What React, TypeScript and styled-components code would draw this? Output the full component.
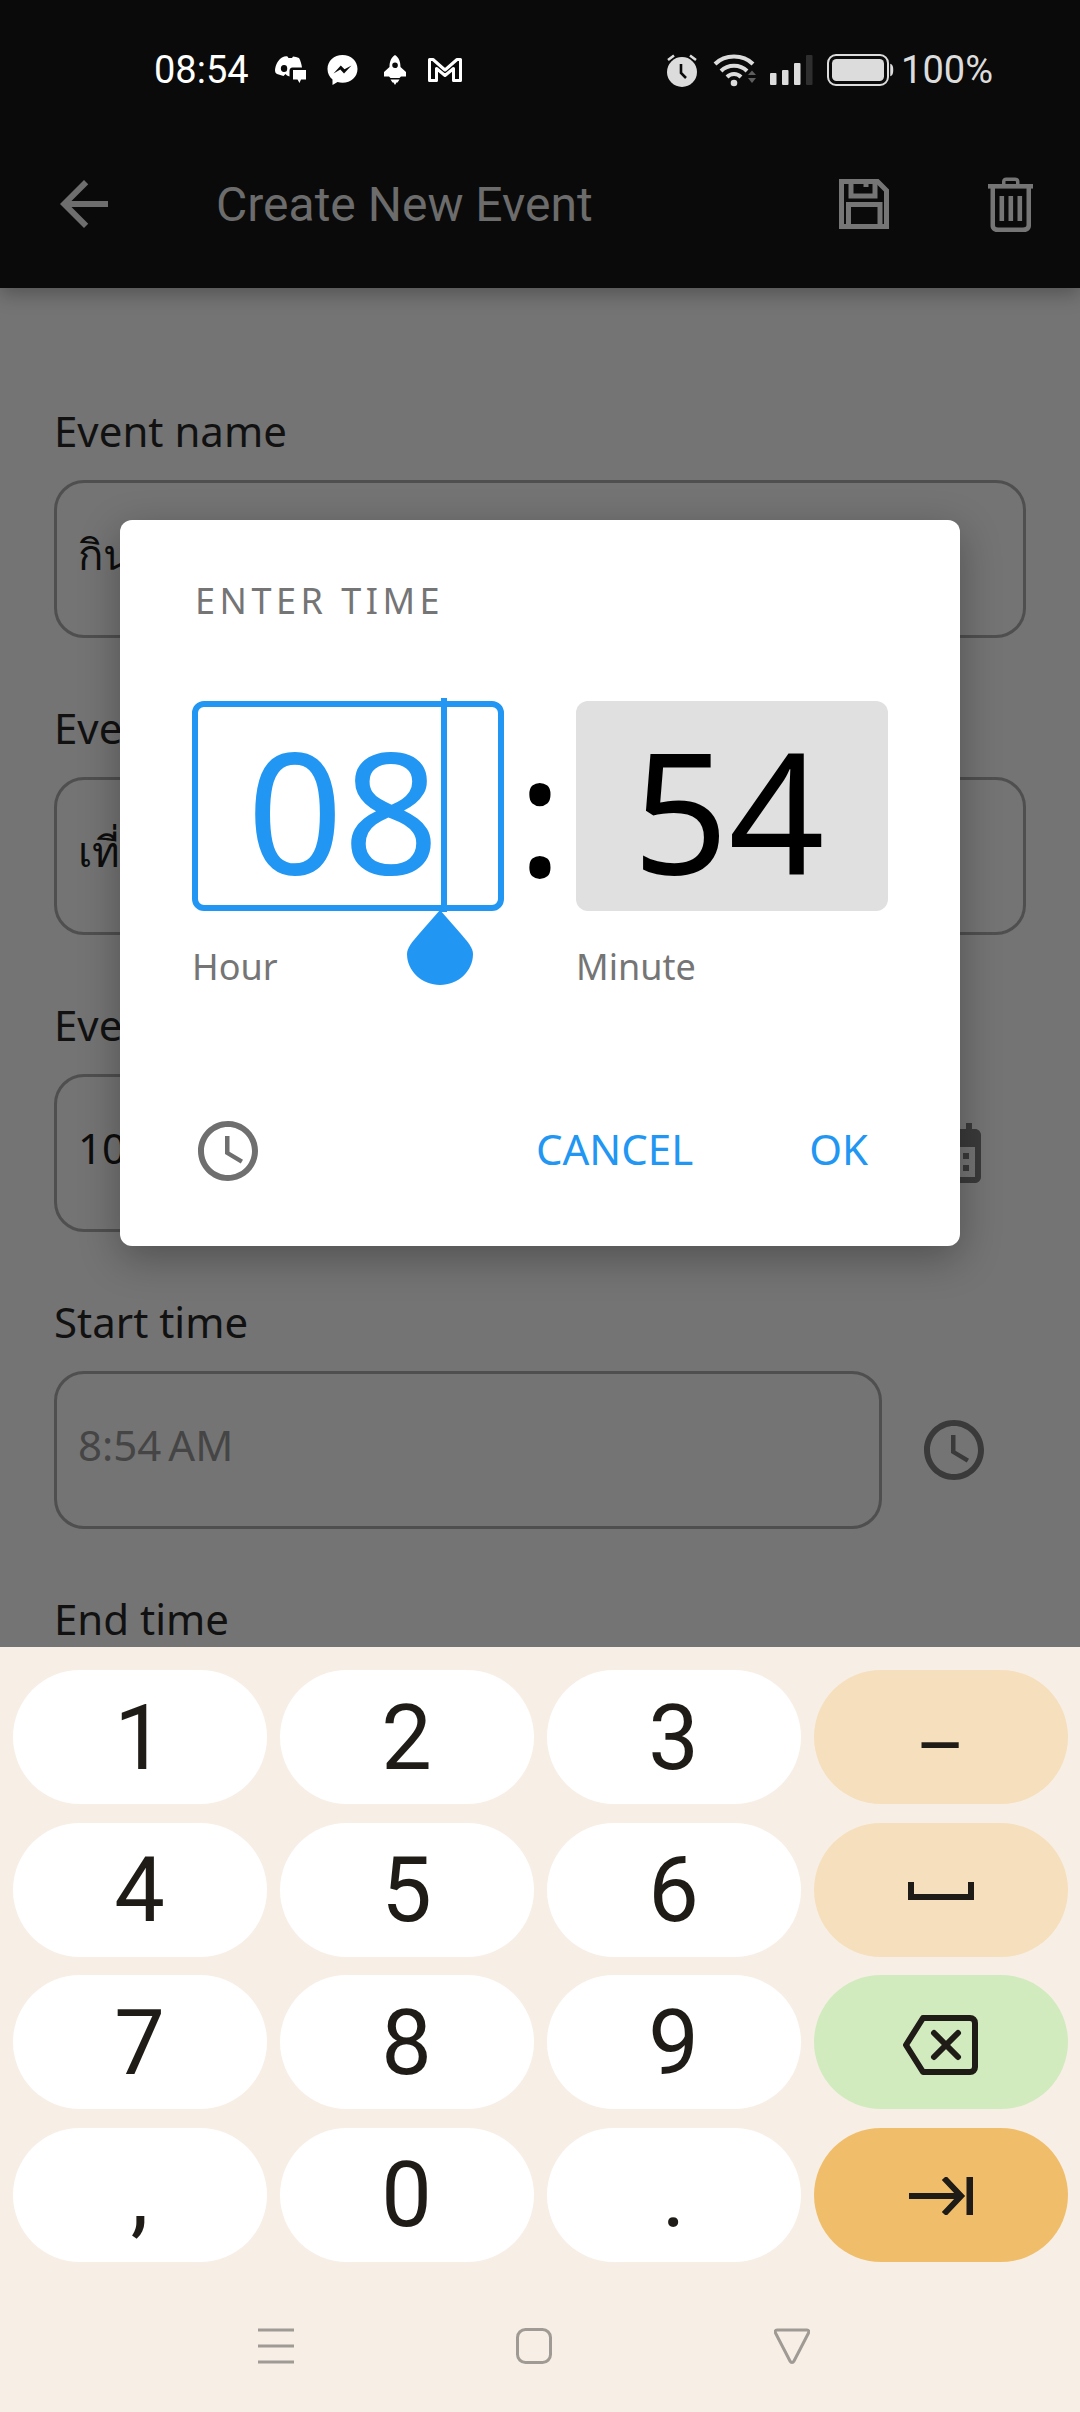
import React from "react";
import styled, { createGlobalStyle } from "styled-components";

const GlobalStyle = createGlobalStyle`
  html, body {
    margin: 0;
    padding: 0;
    background: #747474;
  }

  * {
    box-sizing: border-box;
  }
`;

const Screen = styled.div`
  position: relative;
  display: flex;
  flex-direction: column;
  width: 1080px;
  height: 2412px;
  overflow: hidden;
  background: #747474;
  font-family: "Noto Sans", "Open Sans", sans-serif;
`;

const Top = styled.div`
  position: relative;
  z-index: 1;
  background: #0a0a0a;
  box-shadow: 0 6px 18px rgba(0, 0, 0, 0.28);
`;

const StatusBar = styled.div`
  display: flex;
  align-items: center;
  height: 120px;
  padding: 20px 87px 0 154px;
  font-family: Roboto, sans-serif;
  font-size: 38px;
`;

const Time = styled.span`
  width: 121px;
  color: #ffffff;
`;

const NotifyIcons = styled.div`
  display: flex;
  align-items: center;
  gap: 21px;
  color: #ffffff;
`;

const RocketSlot = styled.span`
  display: flex;
  margin-left: 4px;
`;

const SystemIcons = styled.div`
  display: flex;
  align-items: center;
  margin-left: auto;
  color: #dcdcdc;
`;

const Percent = styled.span`
  margin-left: 7px;
`;

const AppBar = styled.div`
  display: flex;
  align-items: center;
  height: 168px;
  padding: 0 47px 0 48px;
  color: #757575;
`;

const Title = styled.h1`
  margin: 0 0 0 96px;
  font-family: Roboto, sans-serif;
  font-size: 48px;
  font-weight: 400;
  color: #6c6c6c;
`;

const BarActions = styled.div`
  display: flex;
  align-items: center;
  gap: 99px;
  margin-left: auto;
`;

const Form = styled.div`
  flex: 1;
  min-height: 0;
  overflow: hidden;
  padding: 112.5px 54px 0;
`;

const Field = styled.div`
  margin-bottom: 59.5px;
`;

const Label = styled.div`
  height: 60px;
  margin-bottom: 19.5px;
  font-size: 42px;
  line-height: 60px;
  color: #111111;
`;

const InputRow = styled.div<{ $withIcon?: boolean }>`
  display: flex;
  align-items: center;
  gap: 36px;
  margin-right: ${(props) => (props.$withIcon ? "36px" : "0")};
`;

const Input = styled.div<{ $hint?: boolean }>`
  flex: 1;
  height: 158px;
  padding: 0 21px;
  border: 3px solid #4f4f4f;
  border-radius: 30px;
  font-size: 42px;
  line-height: 142px;
  white-space: nowrap;
  color: ${(props) => (props.$hint ? "#454545" : "#0d0d0d")};
`;

const FieldIcon = styled.svg`
  flex: none;
  width: 72px;
  height: 72px;
  fill: #3a3a3a;
`;

const Dialog = styled.div`
  position: absolute;
  top: 520px;
  left: 120px;
  z-index: 2;
  display: flex;
  flex-direction: column;
  width: 840px;
  height: 726px;
  padding: 55px 72px 59px;
  border-radius: 12px;
  background: #ffffff;
  box-shadow: 0 12px 40px rgba(0, 0, 0, 0.3);
`;

const DialogTitle = styled.div`
  height: 52px;
  margin: 0 0 74px 3px;
  font-size: 36px;
  line-height: 52px;
  letter-spacing: 4.5px;
  color: #757575;
`;

const TimeRow = styled.div`
  display: flex;
  align-items: flex-start;
`;

const TimeColumn = styled.div`
  width: 312px;
`;

const TimeBox = styled.div<{ $active?: boolean }>`
  position: relative;
  display: flex;
  align-items: center;
  justify-content: center;
  height: 210px;
  padding: 5px ${(props) => (props.$active ? "10px" : "7px")} 0 0;
  border: ${(props) => (props.$active ? "6px solid #2196f3" : "none")};
  border-radius: 12px;
  background: ${(props) => (props.$active ? "#ffffff" : "#e0e0e0")};
  font-size: 168px;
  line-height: 1;
  color: ${(props) => (props.$active ? "#2196f3" : "#000000")};
`;

const Cursor = styled.div`
  position: absolute;
  top: -9px;
  left: 242.5px;
  width: 6px;
  height: 214px;
  background: #2196f3;
`;

const Handle = styled.svg`
  position: absolute;
  top: 203px;
  left: 209px;
  width: 66px;
  height: 75px;
  fill: #2196f3;
`;

const Colon = styled.div`
  width: 72px;
  height: 210px;
  font-size: 171px;
  line-height: 220px;
  text-align: center;
  color: #000000;
`;

const TimeLabel = styled.div`
  height: 50px;
  margin-top: 30.5px;
  font-size: 36px;
  line-height: 50px;
  color: #757575;
`;

const DialogFooter = styled.div`
  display: flex;
  align-items: center;
  justify-content: space-between;
  margin-top: auto;
  padding-right: 20px;
`;

const ModeIcon = styled.svg`
  width: 72px;
  height: 72px;
  fill: #6f6f6f;
`;

const DialogActions = styled.div`
  display: flex;
  gap: 116px;
  margin-bottom: 6px;
`;

const TextButton = styled.span`
  font-size: 42px;
  color: #2196f3;
`;

const Keyboard = styled.div`
  flex: none;
  display: flex;
  flex-direction: column;
  height: 765px;
  padding: 23px 12.5px 0;
  background: #f7efe6;
`;

const Keys = styled.div`
  display: grid;
  grid-template-columns: repeat(4, 254px);
  grid-auto-rows: 134px;
  column-gap: 13px;
  row-gap: 18.5px;
`;

const Key = styled.div<{ $bg?: string }>`
  display: flex;
  align-items: center;
  justify-content: center;
  padding-top: 2px;
  border-radius: 67px;
  background: ${(props) => props.$bg ?? "#ffffff"};
  font-family: Roboto, sans-serif;
  font-size: 90px;
  color: #1f1b16;
`;

const DashKey = styled.span`
  padding-top: 16px;
  font-size: 76px;
`;

const KeyIcon = styled.svg`
  fill: none;
  stroke: #1f1b16;
  stroke-width: 6;
`;

const BackspaceIcon = styled(KeyIcon)`
  margin: 3px 2px 0 0;
`;

const NavBar = styled.div`
  display: flex;
  align-items: center;
  margin-top: 66px;
  padding-left: 245.5px;
  gap: 222px;
`;

const NavIcon = styled.svg`
  width: 36px;
  height: 36px;
  fill: none;
  stroke: #a09a94;
  stroke-width: 3;
`;

const SaveIcon = () => (
  <svg width="50" height="50" viewBox="0 0 50 50" fill="none" stroke="#757575" strokeWidth="5">
    <path d="M2.5 2.5H38.5L47.5 11.5V47.5H2.5Z" />
    <path d="M12 3V17H36V3" />
    <path d="M27 3V8" />
    <path d="M9.5 48V25.5H41V48" />
  </svg>
);

const TrashIcon = () => (
  <svg width="45" height="55" viewBox="0 0 45 55" fill="#757575">
    <rect x="0" y="7" width="45" height="4.6" />
    <path d="M14 8V4.5C14 2 16 0.5 18 0.5H27C29.5 0.5 31.5 2 31.5 4.5V8H28V5C28 4.2 27.5 4 27 4H18C17.5 4 17.5 4.2 17.5 5V8Z" />
    <path d="M2.5 10H7V48C7 49.8 8.2 50.5 10 50.5H35C36.8 50.5 38.5 49.8 38.5 48V10H43V48.5C43 52.5 40 55 36.5 55H9C5.5 55 2.5 52.5 2.5 48.5Z" />
    <rect x="11.5" y="19" width="4.6" height="25" />
    <rect x="20.5" y="19" width="4.6" height="25" />
    <rect x="29.5" y="19" width="4.6" height="25" />
  </svg>
);

const ClockPath = () => (
  <>
    <path d="M11.99 2C6.47 2 2 6.48 2 12s4.47 10 9.99 10C17.52 22 22 17.52 22 12S17.52 2 11.99 2zM12 20c-4.42 0-8-3.58-8-8s3.58-8 8-8 8 3.58 8 8-3.58 8-8 8z" />
    <path d="M12.5 7H11v6l5.25 3.15.75-1.23-4.5-2.67z" />
  </>
);

const DiscordIcon = () => (
  <svg width="31" height="28" viewBox="0 0 31 28" fill="currentColor">
    <path
      fillRule="evenodd"
      d="M7 1.500C9 0.500 11 0 12.500 0.500L13.500 2H17L18 0.500C20 0.500 22 1 24 2C25.500 4.500 26.500 8 27 11.500H17.500C15.500 11.500 14.500 13 14.500 15V20.500L12 19.500L10.500 18L8.500 20L2 18C0.500 17 0 16 0 14C0.500 9 3 4 7 1.500ZM9 9A3.200 3.500 0 1 0 9.100 16A3.200 3.500 0 1 0 9 9Z"
    />
    <path d="M18 14H31V23.500H26L24.500 27L22.500 23.500H18Z" />
  </svg>
);

const MessengerIcon = () => (
  <svg width="31" height="30" viewBox="0 0 31 30" fill="currentColor">
    <path
      fillRule="evenodd"
      d="M15.500 0C7 0 0.500 6 0.500 14C0.500 18.500 2.500 22 5.500 24.500V30L10.500 27C12 27.500 13.800 27.800 15.500 27.800C24 27.800 30.500 21.800 30.500 14C30.500 6 24 0 15.500 0ZM17 18.500L13.300 14.500L6.500 18.500L13.800 10.500L17.500 14.300L24.500 10.500Z"
    />
  </svg>
);

const RocketIcon = () => (
  <svg width="24" height="30" viewBox="0 0 24 30" fill="currentColor">
    <path
      fillRule="evenodd"
      d="M12 0C16 2.500 17.500 7 17.500 12L23 17V21.500H18L16.500 23H7.500L6 21.500H1V17L6.500 12C6.500 7 8 2.500 12 0ZM12 7.500A2.800 2.800 0 1 0 12.100 13.100A2.800 2.800 0 1 0 12 7.500Z"
    />
    <path d="M7.500 24.500H16.500L14.500 27.500H13.500L12 30L10.500 27.500H9.500Z" />
  </svg>
);

const GmailIcon = () => (
  <svg width="34" height="24" viewBox="0 0 34 24" fill="none" stroke="currentColor" strokeWidth="3" strokeLinejoin="round">
    <path d="M1.500 22.500V1.500H5L17 12L29 1.500H32.500V22.500H25.500V10.500L17 17.500L8.500 10.500V22.500Z" />
  </svg>
);

const AlarmIcon = () => (
  <svg width="32" height="34" viewBox="0 0 32 34" style={{ display: "block" }}>
    <circle cx="16" cy="19" r="15" fill="currentColor" />
    <path d="M2 7L8 2.500M30 7L24 2.500" stroke="currentColor" strokeWidth="2.600" />
    <path d="M15 11V20L20 25" fill="none" stroke="#0a0a0a" strokeWidth="2.600" />
  </svg>
);

const WifiIcon = () => (
  <svg width="46" height="34" viewBox="0 0 46 34" style={{ marginLeft: 15 }} fill="none" stroke="currentColor" strokeWidth="4">
    <path d="M2 11C12 1 30 1 40 11" />
    <path d="M8 18C15 11 27 11 34 18" />
    <path d="M14 24C18 20 24 20 28 24" />
    <circle cx="21" cy="30" r="3.300" fill="currentColor" stroke="none" />
    <path d="M35 22L39 17.500L43 22Z" fill="#5e5e5e" stroke="none" />
    <path d="M35 25L39 30L43 25Z" fill="#5e5e5e" stroke="none" />
  </svg>
);

const SignalIcon = () => (
  <svg width="44" height="30" viewBox="0 0 44 30" style={{ marginLeft: 11 }} fill="currentColor">
    <rect x="0" y="18" width="6.500" height="12" rx="1" />
    <rect x="12" y="15" width="6.500" height="15" rx="1" />
    <rect x="24" y="8" width="6.500" height="22" rx="1" />
    <rect x="36" y="0" width="6.500" height="30" rx="1" fill="#2e2e2e" />
  </svg>
);

const BatteryIcon = () => (
  <svg width="67" height="32" viewBox="0 0 67 32" style={{ marginLeft: 13 }}>
    <rect x="1" y="1" width="60" height="30" rx="8" fill="none" stroke="currentColor" strokeWidth="2" />
    <rect x="5" y="5" width="52" height="22" rx="4.500" fill="currentColor" />
    <path d="M64 11C66 12 66 20 64 21Z" fill="currentColor" stroke="currentColor" strokeWidth="1.500" />
  </svg>
);

const Row = ({ label, value, hint, children }: { label: string; value: string; hint?: boolean; children?: React.ReactNode }) => (
  <Field>
    <Label>{label}</Label>
    <InputRow $withIcon={!!children}>
      <Input $hint={hint}>{value}</Input>
      {children}
    </InputRow>
  </Field>
);

const App = () => (
  <Screen>
    <GlobalStyle />
    <Top>
      <StatusBar>
        <Time>08:54</Time>
        <NotifyIcons>
          <DiscordIcon />
          <MessengerIcon />
          <RocketSlot>
            <RocketIcon />
          </RocketSlot>
          <GmailIcon />
        </NotifyIcons>
        <SystemIcons>
          <AlarmIcon />
          <WifiIcon />
          <SignalIcon />
          <BatteryIcon />
          <Percent>100%</Percent>
        </SystemIcons>
      </StatusBar>
      <AppBar>
        <svg width="72" height="72" viewBox="0 0 24 24" fill="#6e6e6e">
          <path d="M20 11H7.830l5.590-5.590L12 4l-8 8 8 8 1.410-1.410L7.830 13H20v-2z" />
        </svg>
        <Title>Create New Event</Title>
        <BarActions>
          <SaveIcon />
          <TrashIcon />
        </BarActions>
      </AppBar>
    </Top>

    <Form>
      <Row label="Event name" value="กินข้าว" />
      <Row label="Event detail" value="เที่ยว" />
      <Row label="Event date" value="10/10/2023">
        <FieldIcon viewBox="0 0 24 24">
          <path d="M19 4h-1V2h-2v2H8V2H6v2H5c-1.110 0-2 .900-2 2v14c0 1.100.890 2 2 2h14c1.100 0 2-.900 2-2V6c0-1.100-.900-2-2-2zm0 16H5V10h14v10zM9 14H7v-2h2v2zm4 0h-2v-2h2v2zm4 0h-2v-2h2v2zm-8 4H7v-2h2v2zm4 0h-2v-2h2v2zm4 0h-2v-2h2v2z" />
        </FieldIcon>
      </Row>
      <Row label="Start time" value={"8:54\u202FAM"} hint>
        <FieldIcon viewBox="0 0 24 24">
          <ClockPath />
        </FieldIcon>
      </Row>
      <Row label="End time" value="" />
    </Form>

    <Dialog>
      <DialogTitle>ENTER TIME</DialogTitle>
      <TimeRow>
        <TimeColumn>
          <TimeBox $active>
            08
            <Cursor />
            <Handle viewBox="0 0 66 75">
              <path d="M33 0L54 24C61 32 66 38 66 44C66 61 51 75 33 75C15 75 0 61 0 44C0 38 5 32 12 24Z" />
            </Handle>
          </TimeBox>
          <TimeLabel>Hour</TimeLabel>
        </TimeColumn>
        <Colon>:</Colon>
        <TimeColumn>
          <TimeBox>54</TimeBox>
          <TimeLabel>Minute</TimeLabel>
        </TimeColumn>
      </TimeRow>
      <DialogFooter>
        <ModeIcon viewBox="0 0 24 24">
          <ClockPath />
        </ModeIcon>
        <DialogActions>
          <TextButton>CANCEL</TextButton>
          <TextButton>OK</TextButton>
        </DialogActions>
      </DialogFooter>
    </Dialog>

    <Keyboard>
      <Keys>
        <Key>1</Key>
        <Key>2</Key>
        <Key>3</Key>
        <Key $bg="#f6dfbc">
          <DashKey>–</DashKey>
        </Key>
        <Key>4</Key>
        <Key>5</Key>
        <Key>6</Key>
        <Key $bg="#f6dfbc">
          <KeyIcon width="66" height="18" viewBox="0 0 66 18">
            <path d="M3 0V15H63V0" />
          </KeyIcon>
        </Key>
        <Key>7</Key>
        <Key>8</Key>
        <Key>9</Key>
        <Key $bg="#d1ebbf">
          <BackspaceIcon width="76" height="60" viewBox="0 0 76 60">
            <path d="M21 3H68C71 3 73 5 73 8V52C73 55 71 57 68 57H21L4 30Z" strokeLinejoin="round" />
            <path d="M32 18L56 42M56 18L32 42" strokeLinecap="round" />
          </BackspaceIcon>
        </Key>
        <Key>,</Key>
        <Key>0</Key>
        <Key>.</Key>
        <Key $bg="#f0be6b">
          <KeyIcon width="64" height="38" viewBox="0 0 64 38">
            <path d="M0 19H52" />
            <path d="M35 1L52 19L35 37" />
            <path d="M61 0V38" strokeWidth="7" />
          </KeyIcon>
        </Key>
      </Keys>
      <NavBar>
        <NavIcon viewBox="0 0 36 36">
          <path d="M0 2H36M0 18H36M0 34H36" />
        </NavIcon>
        <NavIcon viewBox="0 0 36 36">
          <rect x="1.500" y="1.500" width="33" height="33" rx="8" />
        </NavIcon>
        <NavIcon viewBox="0 0 36 36">
          <path d="M3 2H33C35 2 35 4 34.500 5L20 33C19 35 17 35 16 33L1.500 5C1 4 1 2 3 2Z" />
        </NavIcon>
      </NavBar>
    </Keyboard>
  </Screen>
);

export default App;
